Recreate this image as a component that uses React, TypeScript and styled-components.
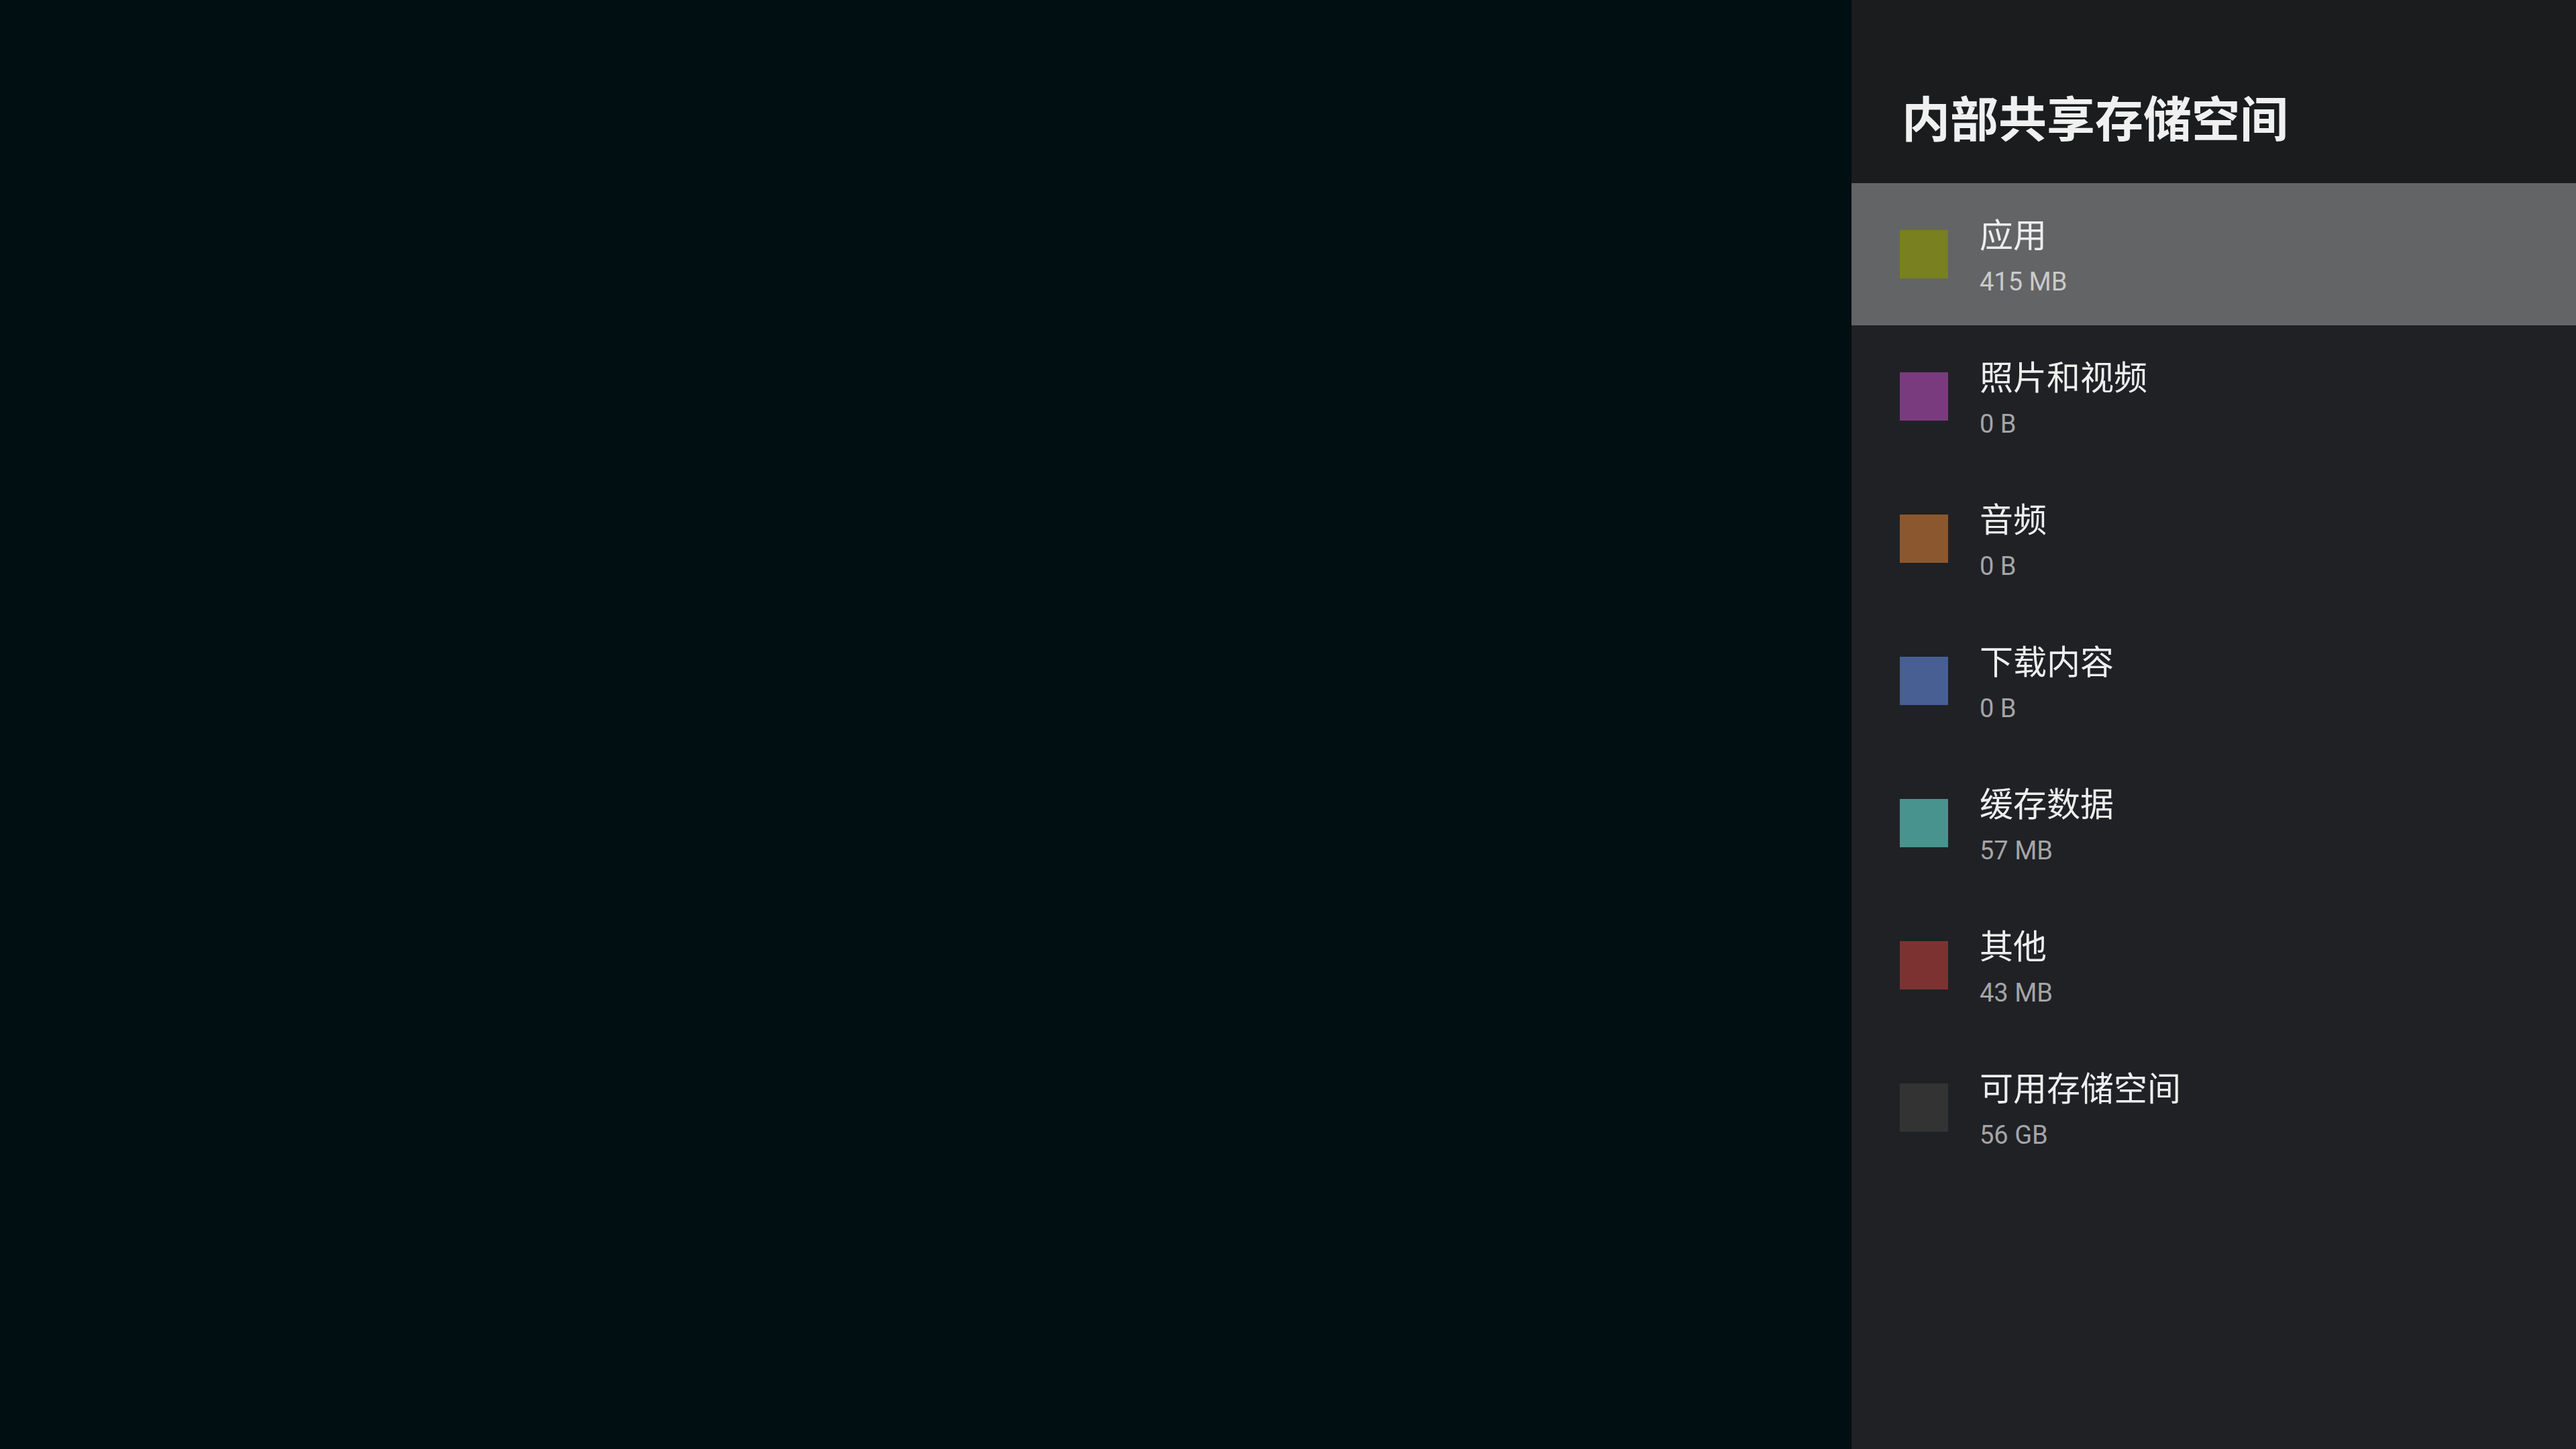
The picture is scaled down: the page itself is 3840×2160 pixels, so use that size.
import styled, { createGlobalStyle } from 'styled-components'

const GlobalStyle = createGlobalStyle`
  html, body {
    margin: 0;
    padding: 0;
    background: #010f13;
  }
  body {
    font-family: Roboto, "Noto Sans CJK SC", sans-serif;
  }
`

const Screen = styled.div`
  display: flex;
  width: 3840px;
  height: 2160px;
  overflow: hidden;
`

const Backdrop = styled.div`
  flex: 1;
  background: #010f13;
`

const Panel = styled.div`
  display: flex;
  flex-direction: column;
  width: 1080px;
  background: #202125;
`

const Header = styled.div`
  height: 273px;
  box-sizing: border-box;
  padding: 130px 0 0 75px;
  background: #1b1c1e;
`

const Title = styled.h1`
  margin: 0;
  font-size: 72px;
  line-height: 100px;
  font-weight: 700;
  color: #f0f0f0;
`

const List = styled.div`
  display: flex;
  flex-direction: column;
`

const Row = styled.div<{ $active?: boolean }>`
  display: flex;
  align-items: center;
  height: 212px;
  padding-left: 72px;
  background: ${p => (p.$active ? '#636466' : 'transparent')};
`

const Swatch = styled.div<{ $color: string }>`
  width: 72px;
  height: 72px;
  flex-shrink: 0;
  background: ${p => p.$color};
`

const Texts = styled.div`
  display: flex;
  flex-direction: column;
  margin-left: 47px;
  margin-top: 12px;
`

const Label = styled.div`
  font-size: 50px;
  line-height: 70px;
  color: #eeeeee;
`

const Size = styled.div<{ $active?: boolean }>`
  font-size: 38px;
  line-height: 66px;
  color: ${p => (p.$active ? '#c9cacb' : '#a4a5a7')};
`

const items = [
  { label: '应用', size: '415 MB', color: '#78801f' },
  { label: '照片和视频', size: '0 B', color: '#7a3b7e' },
  { label: '音频', size: '0 B', color: '#8b572e' },
  { label: '下载内容', size: '0 B', color: '#475f92' },
  { label: '缓存数据', size: '57 MB', color: '#48938e' },
  { label: '其他', size: '43 MB', color: '#7d3232' },
  { label: '可用存储空间', size: '56 GB', color: '#333333' },
]

const App = () => {
  return (
    <>
      <GlobalStyle />
      <Screen>
        <Backdrop />
        <Panel>
          <Header>
            <Title>内部共享存储空间</Title>
          </Header>
          <List>
            {items.map((item, i) => (
              <Row key={item.label} $active={i === 0}>
                <Swatch $color={item.color} />
                <Texts>
                  <Label>{item.label}</Label>
                  <Size $active={i === 0}>{item.size}</Size>
                </Texts>
              </Row>
            ))}
          </List>
        </Panel>
      </Screen>
    </>
  )
}

export default App
